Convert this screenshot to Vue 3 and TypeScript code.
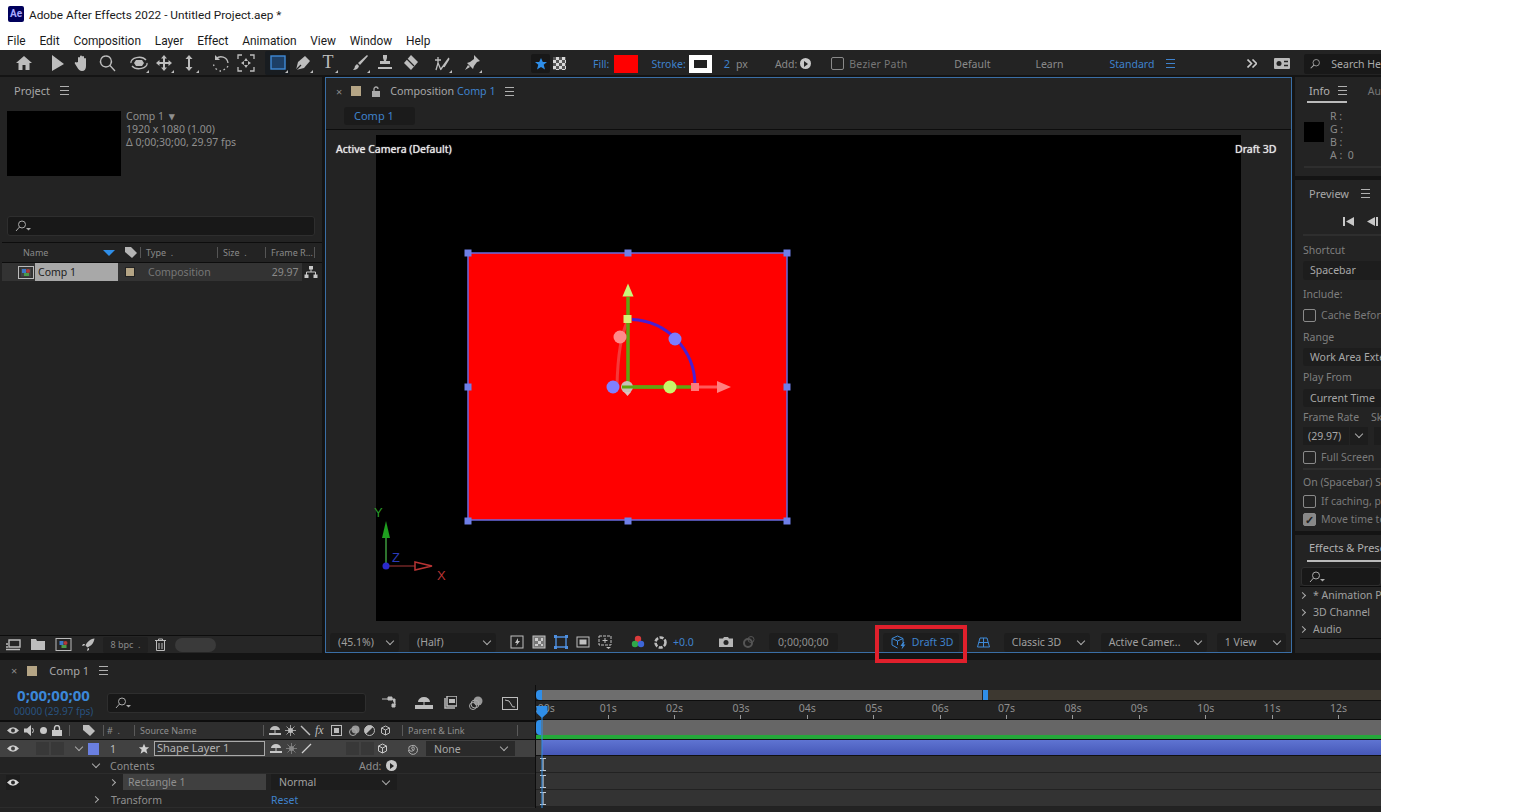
<template>
  <div class="window">
    <!-- title + menu -->
    <header class="titlebar">
      <span class="ae-logo">Ae</span>
      <span>Adobe After Effects 2022 - Untitled Project.aep *</span>
    </header>
    <nav class="menubar">
      <span v-for="m in menus" :key="m">{{ m }}</span>
    </nav>

    <!-- tools -->
    <div class="toolbar">
      <div v-for="(group, gi) in toolGroups" :key="gi" class="tool-group">
        <span v-for="t in group" :key="t.id" class="tool" :class="{ 'tool-on': t.id === 'rect' }">
          <svg width="20" height="20" viewBox="0 0 20 20">
            <text v-if="t.id === 'type'" x="10" y="15" text-anchor="middle" class="tool-t">T</text>
            <path v-if="t.fill" :d="t.fill" class="ico-fill" />
            <path v-if="t.line" :d="t.line" class="ico-line" />
            <path v-if="t.dark" :d="t.dark" class="ico-dark" />
            <rect v-if="t.id === 'rect'" x="3" y="3" width="14" height="13" class="rect-ico" />
            <path v-if="t.more" d="M20 20h-3l3-3z" class="ico-fill" />
          </svg>
        </span>
      </div>
      <div class="tool-opts">
        <span class="star-btn">
          <svg width="14" height="14" viewBox="0 0 14 14"><path d="M7 1l1.800 4H13l-3.300 2.800L11 12.500 7 10l-4 2.500 1.300-4.700L1 5h4.200z" fill="#2f8ee8" /></svg>
        </span>
        <span class="checker"></span>
        <span class="blue fill-lbl">Fill:</span>
        <span class="fill-swatch"></span>
        <span class="blue stroke-lbl">Stroke:</span>
        <span class="stroke-swatch"><i></i></span>
        <span class="blue two">2</span>
        <span class="px">px</span>
        <span class="add-lbl">Add:</span>
        <span class="add-dot"></span>
        <span class="box bez-box"></span>
        <span class="bez-lbl">Bezier Path</span>
        <span class="ws ws-default">Default</span>
        <span class="ws ws-learn">Learn</span>
        <span class="blue ws ws-std">Standard</span>
        <i class="burger burger-blue"></i>
        <svg class="chevrons" width="10" height="9" viewBox="0 0 10 9"><path d="M.5.5l4 4-4 4M5.500.5l4 4-4 4" fill="none" stroke="#c8c8c8" stroke-width="1.600" /></svg>
        <span class="gear-btn">
          <svg width="16" height="11" viewBox="0 0 16 11"><rect width="16" height="11" rx="1" fill="#b9b9b9" /><circle cx="5" cy="5.500" r="2.500" fill="#222" /><path d="M10 3.500h4M10 7.500h4" stroke="#222" stroke-width="1.400" /></svg>
        </span>
        <span class="help-search">
          <svg width="14" height="14" viewBox="0 0 14 14"><circle cx="8.500" cy="5.500" r="3.800" fill="none" stroke="#aaa" /><path d="M5.800 8.300L2 12" stroke="#aaa" stroke-width="1.200" /></svg>
          Search He
        </span>
      </div>
    </div>

    <main class="panels">
      <!-- project -->
      <section class="panel project">
        <div class="project-tab">
          <span class="tab-txt">Project</span>
          <i class="burger"></i>
        </div>
        <div class="project-info">
          <div class="thumb"></div>
          <div class="thumb-txt">
            <div>Comp 1 <b class="tri">▾</b></div>
            <div>1920 x 1080 (1.00)</div>
            <div>Δ 0;00;30;00, 29.97 fps</div>
          </div>
        </div>
        <div class="search project-search">
          <svg width="16" height="12" viewBox="0 0 16 12"><circle cx="7" cy="4.500" r="3.500" fill="none" stroke="#aaa" /><path d="M4.500 7L1 11" stroke="#aaa" /><path d="M11 8h5l-2.500 2.500z" fill="#aaa" /></svg>
        </div>
        <div class="proj-head">
          <span class="col-name">Name</span>
          <svg class="sort" width="12" height="6" viewBox="0 0 12 6"><path d="M0 0h12L6 6z" fill="#2f8ee8" /></svg>
          <svg class="tag" width="13" height="13" viewBox="0 0 13 13"><path d="M1 1h6l6 6-5 5-7-6z" fill="#b5b5b5" /></svg>
          <span class="col-type">Type&nbsp;&nbsp;.</span>
          <span class="col-size">Size&nbsp;&nbsp;.</span>
          <span class="col-rate">Frame R...</span>
        </div>
        <div class="proj-row">
          <svg class="comp-ico" width="16" height="13" viewBox="0 0 16 13">
            <rect x="0.500" y="0.500" width="15" height="12" fill="none" stroke="#bbb" />
            <rect x="3" y="2.500" width="10" height="8" fill="#444" />
            <rect x="4" y="3" width="4" height="4" fill="#3c78c8" />
            <circle cx="10" cy="5" r="2" fill="#b03a3a" />
            <rect x="6" y="7" width="5" height="3" fill="#4a9a4a" />
          </svg>
          <span class="proj-name">Comp 1</span>
          <span class="proj-color"></span>
          <span class="proj-type">Composition</span>
          <span class="proj-rate">29.97</span>
          <span class="flow-cell">
            <svg width="14" height="14" viewBox="0 0 14 14"><path d="M5 1h4v3.500H5zM0.500 9.500h4V13h-4zM9.500 9.500h4V13h-4z" fill="#c8c8c8" /><path d="M7 4v3M2.500 10V7h9v3" fill="none" stroke="#c8c8c8" /></svg>
          </span>
        </div>
        <div class="project-rest"></div>
        <div class="project-foot">
          <svg width="16" height="12" viewBox="0 0 16 12"><path d="M4 1h11v7H4zM1 5h2M1 8h2M1 10.500h14" fill="none" stroke="#bbb" stroke-width="1.400" /></svg>
          <svg width="14" height="11" viewBox="0 0 14 11"><path d="M0 0h5l1 2h8v9H0z" fill="#bdbdbd" /></svg>
          <svg width="17" height="13" viewBox="0 0 16 13"><rect x="0.500" y="0.500" width="15" height="12" fill="none" stroke="#bbb" /><rect x="4" y="3" width="4" height="4" fill="#3c78c8" /><circle cx="10" cy="5" r="2" fill="#b03a3a" /><rect x="6" y="7" width="5" height="3" fill="#4a9a4a" /></svg>
          <svg width="13" height="13" viewBox="0 0 13 13"><path d="M12.500 0.500C8 1 5 4 3.500 7.500l2 2C9 8 12 5 12.500 0.500zM3 6H1l-1 2 2.500-.5zM7 10v2l-2 1 .5-2.500z" fill="#bdbdbd" /></svg>
          <span class="bpc">8 bpc&nbsp;&nbsp;.</span>
          <svg width="11" height="13" viewBox="0 0 11 13"><path d="M0 2.500h11M3.500 2.500V1h4v1.500M1.500 3v9.500h8V3M4 5v6M7 5v6" fill="none" stroke="#bbb" /></svg>
          <span class="pill"></span>
        </div>
      </section>

      <!-- composition viewer -->
      <section class="panel comp">
        <div class="comp-tab">
          <span class="x">×</span>
          <span class="swatch-tan"></span>
          <svg class="lock" width="10" height="11" viewBox="0 0 10 11"><rect x="1" y="5" width="8" height="6" fill="#aaa" /><path d="M3 5V3a2 2 0 0 1 4 0" fill="none" stroke="#aaa" stroke-width="1.300" /></svg>
          <span class="comp-title">Composition <em class="blue">Comp 1</em></span>
          <i class="burger"></i>
        </div>
        <div class="comp-sub">
          <span class="comp-chip blue">Comp 1</span>
        </div>
        <div class="viewer">
          <span class="view-label view-left">Active Camera (Default)</span>
          <span class="view-label view-right">Draft 3D</span>
          <svg class="stage" width="865" height="486" viewBox="376 135 865 486">
            <rect x="468" y="253" width="319" height="267" fill="#ff0000" stroke="#6a6ae0" stroke-width="1.500" />
            <rect v-for="h in handles" :key="h[0] + '-' + h[1]" :x="h[0] - 3.5" :y="h[1] - 3.5" width="7" height="7" fill="#6e7fe8" />
            <!-- gizmo -->
            <path d="M695 387h24" stroke="#ff5a5a" stroke-width="3" />
            <path d="M717 381l14 6-14 6z" fill="#ff8080" />
            <path d="M617 386Q618 340 628 320" fill="none" stroke="#f53a3a" stroke-width="3" />
            <path d="M632 319.500A66 66 0 0 1 695 385" fill="none" stroke="#4b1fd0" stroke-width="3" />
            <path d="M628 297V387M628 387H695" stroke="#5fa510" stroke-width="3.500" />
            <path d="M628 283.500l5.500 13h-11z" fill="#c8f57a" />
            <circle cx="675" cy="339" r="6.500" fill="#7d7dff" />
            <circle cx="670" cy="387" r="6.500" fill="#c9f56a" />
            <circle cx="620" cy="337" r="6.500" fill="#ff8a8a" />
            <circle cx="613" cy="387" r="6.500" fill="#8080ff" />
            <circle cx="627" cy="387" r="6" fill="#c8c0b8" />
            <path d="M624 392l3.500 4 3.500-4z" fill="#e0c0c0" />
            <path d="M622 387h40" stroke="#5fa510" stroke-width="3" />
            <rect x="623.500" y="315" width="8" height="8" fill="#d8ee77" />
            <rect x="691" y="383" width="8" height="8" fill="#ff7a7a" />
            <!-- axis -->
            <path d="M386 566V538" stroke="#3c9a3c" stroke-width="1.500" />
            <path d="M386 521l4 17h-8z" fill="#1f9f1f" />
            <path d="M386 566H415" stroke="#a83838" />
            <path d="M415 562l17 4-17 4z" fill="none" stroke="#b83434" stroke-width="1.500" />
            <circle cx="386" cy="566" r="3.500" fill="#2a2acc" />
            <text x="374" y="517" class="axis" fill="#2a9a2a">Y</text>
            <text x="392" y="562" class="axis" fill="#2a3ab8">Z</text>
            <text x="437" y="580" class="axis" fill="#b83434">X</text>
          </svg>
        </div>
        <div class="comp-foot">
          <span class="dd dd-zoom">(45.1%) <i class="chev"></i></span>
          <span class="dd dd-half">(Half) <i class="chev"></i></span>
          <span class="foot-ico ico-a">
            <svg width="14" height="14" viewBox="0 0 14 14"><rect x="1" y="1" width="12" height="12" fill="none" stroke="#c0c0c0" /><path d="M8 3L5 8h2l-1 3 4-5H8z" fill="#c0c0c0" /></svg>
          </span>
          <span class="foot-ico">
            <svg width="14" height="14" viewBox="0 0 14 14"><rect x="1" y="1" width="12" height="12" fill="#777" stroke="#c0c0c0" /><path d="M3 3h3v3H3zM9 3h2v3H9zM6 6h3v3H6zM3 9h3v2H3zM9 9h2v2H9z" fill="#ccc" /></svg>
          </span>
          <span class="foot-ico">
            <svg width="14" height="14" viewBox="0 0 14 14"><path d="M2 2h10v10H2z" fill="none" stroke="#4e8fe0" stroke-width="1.400" /><path d="M0 0h3v3H0zM11 0h3v3h-3zM0 11h3v3H0zM11 11h3v3h-3z" fill="#4e8fe0" /></svg>
          </span>
          <span class="foot-ico">
            <svg width="14" height="14" viewBox="0 0 14 14"><rect x="1" y="2" width="12" height="10" fill="none" stroke="#c0c0c0" /><rect x="3.500" y="4.500" width="7" height="5" fill="#c0c0c0" /></svg>
          </span>
          <span class="foot-ico">
            <svg width="14" height="14" viewBox="0 0 14 14"><rect x="1" y="1" width="12" height="9" fill="none" stroke="#c0c0c0" stroke-dasharray="3 1" /><path d="M7 3v5M4.500 5.500h5" stroke="#c0c0c0" /><path d="M8 12h5l-2.500 2z" fill="#c0c0c0" /></svg>
          </span>
          <svg class="rgb" width="14" height="14" viewBox="0 0 14 14"><circle cx="7" cy="4" r="3.200" fill="#d93b3b" /><circle cx="4" cy="9" r="3.200" fill="#2fa84a" /><circle cx="10" cy="9" r="3.200" fill="#3d66d8" /></svg>
          <svg class="shutter" width="13" height="13" viewBox="0 0 13 13"><circle cx="6.500" cy="6.500" r="5" fill="none" stroke="#bdbdbd" stroke-width="2.600" stroke-dasharray="4 1.500" /></svg>
          <span class="blue exposure">+0.0</span>
          <svg class="cam" width="14" height="12" viewBox="0 0 14 12"><path d="M0 2.500h4L5 1h4l1 1.500h4V11H0z" fill="#b5b5b5" /><circle cx="7" cy="6.500" r="2.500" fill="#232323" /></svg>
          <svg class="cam-off" width="14" height="12" viewBox="0 0 14 12"><circle cx="7" cy="7" r="4" fill="none" stroke="#555" stroke-width="2" /><circle cx="10" cy="3.500" r="3" fill="none" stroke="#555" /></svg>
          <span class="time-box">0;00;00;00</span>
          <span class="draft-btn blue">
            <svg width="16" height="15" viewBox="0 0 16 15"><path d="M6.500 1L12 3.500V7M6.500 1L1 3.500v6.500l5.500 3M1 3.500l5.500 2.500L12 3.500M6.500 6v4" fill="none" stroke="#3f8ad8" /><path d="M12 7l-2.500 4h2l-1 3.500 4-5h-2l1-2.500z" fill="#3f8ad8" /></svg>
            Draft 3D
          </span>
          <svg class="grid-ico" width="13" height="11" viewBox="0 0 13 11"><path d="M3 1h7l2.500 9H.5zM6.500 1v9M1.800 5.500h9.400" fill="none" stroke="#3f8ad8" /></svg>
          <span class="dd dd-classic">Classic 3D <i class="chev"></i></span>
          <span class="dd dd-cam">Active Camer... <i class="chev"></i></span>
          <span class="dd dd-view">1 View <i class="chev"></i></span>
        </div>
      </section>

      <!-- right stack -->
      <aside class="right">
        <section class="panel info">
          <div class="info-tabs">
            <span class="info-tab">Info <i class="burger"></i></span>
            <span class="dim-tab">Au</span>
          </div>
          <div class="info-body">
            <span class="info-swatch"></span>
            <div class="rgba">
              <div>R :</div>
              <div>G :</div>
              <div>B :</div>
              <div>A :&nbsp; 0</div>
            </div>
          </div>
        </section>
        <section class="panel preview">
          <div class="prev-title">Preview <i class="burger"></i></div>
          <div class="prev-btns">
            <svg width="11" height="9" viewBox="0 0 11 9"><path d="M0 0h2v9H0zM11 0v9L3 4.500z" fill="#c8c8c8" /></svg>
            <svg width="11" height="9" viewBox="0 0 11 9"><path d="M9 0h2v9H9zM8 0v9L0 4.500z" fill="#c8c8c8" /></svg>
          </div>
          <div class="lbl m5">Shortcut</div>
          <div class="drop m2 tall">Spacebar</div>
          <div class="lbl m5">Include:</div>
          <div class="check-row m3"><span class="box"></span>Cache Before</div>
          <div class="lbl m4">Range</div>
          <div class="drop m2">Work Area Extents</div>
          <div class="lbl m2">Play From</div>
          <div class="drop m3">Current Time</div>
          <div class="lbl m1 rate-lbl"><span>Frame Rate</span><span>Sk</span></div>
          <div class="rate-row m1">
            <span class="rate-val">(29.97)</span>
            <span class="rate-chev"><i class="chev"></i></span>
            <span class="rate-next"></span>
          </div>
          <div class="check-row m3 rule"><span class="box"></span>Full Screen</div>
          <div class="lbl m3">On (Spacebar) Stop</div>
          <div class="check-row m1"><span class="box"></span>If caching, play</div>
          <div class="check-row"><span class="box box-on">✓</span>Move time to</div>
        </section>
        <section class="panel effects">
          <div class="eff-tab">Effects &amp; Presets</div>
          <div class="search eff-search">
            <svg width="16" height="12" viewBox="0 0 16 12"><circle cx="7" cy="4.500" r="3.500" fill="none" stroke="#aaa" /><path d="M4.500 7L1 11" stroke="#aaa" /><path d="M11 8h5l-2.500 2.500z" fill="#aaa" /></svg>
          </div>
          <div class="eff-list">
            <div v-for="e in effects" :key="e"><i class="chev-r"></i>{{ e }}</div>
          </div>
        </section>
      </aside>
    </main>

    <!-- timeline -->
    <section class="timeline">
      <div class="tl-tab">
        <span class="x">×</span>
        <span class="swatch-tan"></span>
        <span class="tl-name">Comp 1</span>
        <i class="burger"></i>
      </div>
      <div class="tl-body">
        <div class="tl-left">
          <div class="tl-time">
            <div class="timecode">
              <div class="tc-main">0;00;00;00</div>
              <div class="tc-sub">00000 (29.97 fps)</div>
            </div>
            <div class="search tl-search">
              <svg width="16" height="12" viewBox="0 0 16 12"><circle cx="7" cy="4.500" r="3.500" fill="none" stroke="#aaa" /><path d="M4.500 7L1 11" stroke="#aaa" /><path d="M11 8h5l-2.500 2.500z" fill="#aaa" /></svg>
            </div>
            <div class="tl-tools">
              <svg width="16" height="14" viewBox="0 0 16 14"><path d="M0 3h6M6 1h4v3H6zM10 3h3v6M10 8h3v3h-3z" fill="#bdbdbd" stroke="#bdbdbd" /></svg>
              <svg width="18" height="13" viewBox="0 0 18 13"><path d="M3 6a6 5 0 0 1 12 0zM8.500 6h1v3h-1zM0 9h18v4H0z" fill="#bdbdbd" /></svg>
              <svg width="14" height="14" viewBox="0 0 14 14"><path d="M4 0h10v10H4zM2 2v10h10" fill="none" stroke="#bdbdbd" stroke-width="1.500" /><rect x="6" y="3" width="6" height="4" fill="#bdbdbd" /></svg>
              <svg width="14" height="14" viewBox="0 0 14 14"><circle cx="9" cy="5" r="4.500" fill="#999" /><circle cx="6" cy="8" r="4" fill="none" stroke="#aaa" /><circle cx="4" cy="10" r="3.500" fill="none" stroke="#aaa" /></svg>
              <svg width="16" height="14" viewBox="0 0 16 14"><rect x="0.500" y="1.500" width="15" height="12" fill="none" stroke="#bdbdbd" /><path d="M3 4q5 0 6 4t4 3" fill="none" stroke="#bdbdbd" /></svg>
            </div>
          </div>
          <div class="tl-head">
            <div class="head-av">
              <svg width="12" height="9" viewBox="0 0 12 9"><path d="M0 4.500Q6-2 12 4.500 6 11 0 4.500z" fill="#c8c8c8" /><circle cx="6" cy="4.500" r="2" fill="#333" /></svg>
              <svg width="11" height="11" viewBox="0 0 11 11"><path d="M0 3.500h3L7 0v11L3 7.500H0z" fill="#c8c8c8" /><path d="M8.500 3q2 2.500 0 5" fill="none" stroke="#c8c8c8" /></svg>
              <span class="solo-dot"></span>
              <svg width="10" height="11" viewBox="0 0 10 11"><rect y="5" width="10" height="6" fill="#c8c8c8" /><path d="M2.500 5V3a2.500 2.500 0 0 1 5 0v2" fill="none" stroke="#c8c8c8" stroke-width="1.400" /></svg>
            </div>
            <svg class="tl-tag" width="13" height="13" viewBox="0 0 13 13"><path d="M1 1h6l6 6-5 5-7-6z" fill="#bdbdbd" /></svg>
            <span class="hash">#&nbsp;&nbsp;.</span>
            <span class="src">Source Name</span>
            <div class="head-sw">
              <svg width="12" height="11" viewBox="0 0 12 11"><path d="M1 5a5 4 0 0 1 10 0zM5.500 5h1v3h-1zM0 8h12v2H0z" fill="#bdbdbd" /></svg>
              <svg width="11" height="11" viewBox="0 0 11 11"><circle cx="5.500" cy="5.500" r="2.500" fill="#bdbdbd" /><path d="M5.500 0v11M0 5.500h11M1.500 1.500l8 8M9.500 1.500l-8 8" stroke="#bdbdbd" stroke-width=".8" /></svg>
              <svg width="11" height="11" viewBox="0 0 11 11"><path d="M1 1l9 9" stroke="#bdbdbd" stroke-width="1.400" /></svg>
              <em class="fx">fx</em>
              <svg class="sw-film" width="11" height="11" viewBox="0 0 11 11"><rect x=".5" y=".5" width="10" height="10" fill="none" stroke="#bdbdbd" /><path d="M3 3h5v5H3z" fill="#bdbdbd" /></svg>
              <svg class="sw-blur" width="12" height="12" viewBox="0 0 12 12"><circle cx="7.500" cy="4.500" r="4" fill="#999" /><circle cx="5" cy="7" r="3.500" fill="none" stroke="#aaa" /></svg>
              <svg width="11" height="11" viewBox="0 0 11 11"><circle cx="5.500" cy="5.500" r="5" fill="none" stroke="#bdbdbd" /><path d="M5.500.5a5 5 0 0 0 0 10z" transform="rotate(45 5.500 5.500)" fill="#bdbdbd" /></svg>
              <svg class="sw-cube" width="11" height="11" viewBox="0 0 11 11"><path d="M5.500 1l4 2v5l-4 2-4-2V3zM1.500 3l4 2 4-2M5.500 5v5" fill="none" stroke="#bdbdbd" /></svg>
            </div>
            <span class="parent">Parent &amp; Link</span>
          </div>
          <div class="layer-row">
            <svg class="eye" width="12" height="9" viewBox="0 0 12 9"><path d="M0 4.500Q6-2 12 4.500 6 11 0 4.500z" fill="#d0d0d0" /><circle cx="6" cy="4.500" r="2" fill="#414141" /></svg>
            <span class="cell-dark c1"></span>
            <span class="cell-dark"></span>
            <i class="chev lay-chev"></i>
            <span class="lay-color"></span>
            <span class="lay-num">1</span>
            <svg class="lay-star" width="12" height="12" viewBox="0 0 14 14"><path d="M7 1l1.800 4H13l-3.300 2.800L11 12.500 7 10l-4 2.500 1.300-4.700L1 5h4.200z" fill="#d0d0d0" /></svg>
            <span class="lay-name">Shape Layer 1</span>
            <svg class="sw1" width="12" height="11" viewBox="0 0 12 11"><path d="M1 5a5 4 0 0 1 10 0zM5.500 5h1v3h-1zM0 8h12v2H0z" fill="#c8c8c8" /></svg>
            <svg class="sw2" width="11" height="11" viewBox="0 0 11 11"><circle cx="5.500" cy="5.500" r="2.500" fill="#888" /><path d="M5.500 0v11M0 5.500h11M1.500 1.500l8 8M9.500 1.500l-8 8" stroke="#888" stroke-width=".8" /></svg>
            <svg class="sw3" width="11" height="11" viewBox="0 0 11 11"><path d="M1 10L10 1" stroke="#d0d0d0" stroke-width="1.300" /></svg>
            <span class="cell-dark c2"></span>
            <span class="cell-dark"></span>
            <svg class="sw4" width="11" height="11" viewBox="0 0 11 11"><path d="M5.500 1l4 2v5l-4 2-4-2V3zM1.500 3l4 2 4-2M5.500 5v5" fill="none" stroke="#c8c8c8" /></svg>
            <svg class="spiral" width="12" height="12" viewBox="0 0 12 12"><path d="M6 6.500a1.300 1.300 0 1 1 1.300-1.300 2.800 2.800 0 1 1-3-2.500A4.500 4.500 0 1 1 1.500 7" fill="none" stroke="#b0b0b0" /></svg>
            <span class="parent-dd">None <i class="chev"></i></span>
          </div>
          <div class="prop-row">
            <i class="chev prop-chev"></i><span class="prop-lbl">Contents</span>
            <span class="add2">Add:</span><span class="add-dot"></span>
          </div>
          <div class="rect-row">
            <span class="eye-cell">
              <svg width="12" height="9" viewBox="0 0 12 9"><path d="M0 4.500Q6-2 12 4.500 6 11 0 4.500z" fill="#d8d8d8" /><circle cx="6" cy="4.500" r="2" fill="#282828" /></svg>
            </span>
            <i class="chev-r rect-chev"></i>
            <span class="rect-name">Rectangle 1</span>
            <span class="blend-dd">Normal <i class="chev"></i></span>
          </div>
          <div class="prop-row">
            <i class="chev-r trans-chev"></i><span class="prop-lbl">Transform</span>
            <span class="reset blue">Reset</span>
          </div>
        </div>
        <div class="tl-right">
          <div class="nav-bar">
            <span class="nav-range"></span>
            <span class="nav-end"></span>
          </div>
          <div class="ruler">
            <span v-for="s in ticks" :key="s" class="tick">{{ s }}</span>
          </div>
          <div class="work-area"></div>
          <div class="green-line"></div>
          <div class="layer-bar"></div>
          <div v-for="n in 3" :key="n" class="track">
            <svg width="8" height="13" viewBox="0 0 8 13"><path d="M1 .5h6M4 .5v12M1 12.500h6" fill="none" stroke="#c4ccd6" stroke-width="1.200" /></svg>
          </div>
          <svg class="cti" width="14" height="130" viewBox="0 0 14 130"><path d="M1.500 5h11v7L7 17l-5.500-5z" fill="#2f8ee8" /><path d="M7 14v116" stroke="#2f8ee8" /></svg>
        </div>
      </div>
    </section>

    <!-- annotation on the screenshot -->
    <div class="callout"></div>
  </div>
</template>

<script setup lang="ts">
interface Tool {
  id: string
  fill?: string
  line?: string
  dark?: string
  more?: boolean
}

const menus = ['File', 'Edit', 'Composition', 'Layer', 'Effect', 'Animation', 'View', 'Window', 'Help']

const toolGroups: Tool[][] = [
  [{ id: 'home', fill: 'M10 3l8 7h-2.500v7h-4v-5h-3v5h-4v-7H2z' }],
  [
    { id: 'select', fill: 'M5 2l12 9-12 7z' },
    { id: 'hand', fill: 'M6 9V5a1 1 0 0 1 2 0v3-4.500a1 1 0 0 1 2 0V8 4a1 1 0 0 1 2 0v5-3a1 1 0 0 1 2 0v7q0 5-4 5-3 0-5-4l-2.200-3.500a1 1 0 0 1 1.700-1z' },
    { id: 'zoom', line: 'M9 3a5.500 5.500 0 1 1-.1 0M13 12.500l5 5.500' },
  ],
  [
    { id: 'orbit', line: 'M2 10a8 5 0 0 1 15-3M18 10a8 5 0 0 1-15 3', fill: 'M7 7h6l2 3-2 3H7l-2-3z', more: true },
    { id: 'move', fill: 'M10 2l3 3.500h-2V9h3.500V7l3.500 3-3.500 3v-2H11v3.500h2L10 18l-3-3.500h2V11H5.500v2L2 10l3.500-3v2H9V5.500H7z', more: true },
    { id: 'dolly', fill: 'M10 2l3.500 4H11v8h2.500L10 18l-3.500-4H9V6H6.500z', more: true },
  ],
  [
    { id: 'rotate', fill: 'M4 2v5h5z', line: 'M5 6a7 7 0 0 1 12 4M17 13l-1 1.500M14 16l-1.500 1M10 18H8.500M6 16.500l-1.500-1M3 13l-.5-1.500' },
    { id: 'anchor', line: 'M2 6V2h4M14 2h4v4M18 14v4h-4M6 18H2v-4', fill: 'M10 5l2 3H8zM10 15l2-3H8zM5 10l3-2v4zM15 10l-3-2v4z' },
  ],
  [
    { id: 'rect', more: true },
    { id: 'pen', fill: 'M3 17l2-8 7-6 5 5-6 7z', dark: 'M3 17l5-5', more: true },
    { id: 'type', more: true },
  ],
  [
    { id: 'brush', fill: 'M17 2l1 1-8 9-2-2zM7 11l2 2q-1 4-6 4 2-2 2-4z', more: true },
    { id: 'stamp', fill: 'M8 2h4v3l-1 3h4v3H5V8h4L8 5zM3 14h14v2H3z' },
    { id: 'eraser', fill: 'M11 2l7 7-7 8-7-7z', dark: 'M7 6l7 7' },
  ],
  [{ id: 'roto', line: 'M6 4v6M3 7h6M6 10l-2 7M6 10l3 7M9 16L17 5M12 14l5-8', more: true }],
  [{ id: 'pin', fill: 'M12 2l6 6-3 1-3 4-1 3-6-6 3-1 4-3zM6 12l-3 5 5-3z', more: true }],
]

const handles: [number, number][] = [
  [468, 253], [628, 253], [787, 253],
  [468, 387], [787, 387],
  [468, 521], [628, 521], [787, 521],
]

const effects = ['* Animation Presets', '3D Channel', 'Audio']

const ticks = [':00s', '01s', '02s', '03s', '04s', '05s', '06s', '07s', '08s', '09s', '10s', '11s', '12s']
</script>

<style>
html,
body {
  margin: 0;
  background: #fff;
}
</style>

<style scoped>
.window {
  position: relative;
  width: 1381px;
  height: 812px;
  overflow: hidden;
  background: #141414;
  font-family: "Noto Sans", "Open Sans", sans-serif;
  font-size: 10.500px;
  color: #9a9a9a;
  display: flex;
  flex-direction: column;
}
.blue {
  color: #3f82cc;
}
em {
  font-style: normal;
}

/* shared bits */
.burger {
  display: inline-block;
  width: 9px;
  height: 7px;
  border-top: 1px solid #b0b0b0;
  border-bottom: 1px solid #b0b0b0;
  background: linear-gradient(#b0b0b0, #b0b0b0) center / 100% 1px no-repeat;
}
.burger.burger-blue {
  border-color: #3f82cc;
  background-image: linear-gradient(#3f82cc, #3f82cc);
  margin-left: 12px;
}
.chev {
  display: inline-block;
  width: 5px;
  height: 5px;
  border-right: 1px solid #aaa;
  border-bottom: 1px solid #aaa;
  transform: rotate(45deg);
}
.chev-r {
  display: inline-block;
  width: 4px;
  height: 4px;
  border-right: 1px solid #aaa;
  border-top: 1px solid #aaa;
  transform: rotate(45deg);
}
.box {
  display: inline-block;
  box-sizing: border-box;
  width: 13px;
  height: 13px;
  border: 1.500px solid #8a8a8a;
  border-radius: 2px;
  flex: none;
}
.search {
  box-sizing: border-box;
  background: #181818;
  border: 1px solid #2e2e2e;
  border-radius: 3px;
  display: flex;
  align-items: center;
  padding-left: 7px;
}
.swatch-tan {
  width: 10px;
  height: 10px;
  background: #b5a585;
  flex: none;
}
.x {
  color: #8a8a8a;
  font-size: 11px;
}
.add-dot {
  width: 11px;
  height: 11px;
  border-radius: 50%;
  background: #c8c8c8;
  position: relative;
  flex: none;
}
.add-dot::after {
  content: "";
  position: absolute;
  left: 4px;
  top: 2.500px;
  border-left: 4px solid #232323;
  border-top: 3px solid transparent;
  border-bottom: 3px solid transparent;
}

/* title + menu */
.titlebar {
  height: 28px;
  box-sizing: border-box;
  padding: 2px 0 0 8px;
  background: #fff;
  color: #1a1a1a;
  font-family: Roboto, sans-serif;
  font-size: 11.800px;
  display: flex;
  align-items: center;
  gap: 5px;
}
.ae-logo {
  width: 16px;
  height: 16px;
  margin-top: -2px;
  background: #00005b;
  border-radius: 2px;
  color: #a7a8ff;
  font-size: 10px;
  font-weight: 700;
  text-align: center;
  line-height: 16px;
}
.menubar {
  height: 22px;
  box-sizing: border-box;
  padding: 3px 0 0 7px;
  background: #fff;
  color: #1a1a1a;
  font-family: Roboto, sans-serif;
  font-size: 11.900px;
  display: flex;
  align-items: center;
  gap: 13.800px;
}

/* toolbar */
.toolbar {
  height: 25px;
  margin-bottom: 2px;
  background: #232323;
  display: flex;
  align-items: center;
  padding-left: 11px;
}
.tool-group {
  display: flex;
  margin-right: 7px;
}
.tool-group:first-child {
  margin-right: 8px;
}
.tool-group:nth-child(7) {
  margin-right: 5px;
}
.tool {
  width: 25px;
  height: 24px;
  display: flex;
  align-items: center;
  justify-content: center;
  box-sizing: border-box;
}
.tool-on {
  background: #181c20;
  border-radius: 2px;
}
.ico-fill {
  fill: #bdbdbd;
}
.ico-line {
  fill: none;
  stroke: #bdbdbd;
  stroke-width: 1.300;
}
.ico-dark {
  fill: none;
  stroke: #232323;
  stroke-width: 1.200;
}
.rect-ico {
  fill: #1d3f66;
  stroke: #3f8ad8;
  stroke-width: 1.400;
}
.tool-t {
  font-family: "Liberation Serif", serif;
  font-size: 18px;
  fill: #bdbdbd;
}
.tool-opts {
  display: flex;
  align-items: center;
  flex: 1;
  margin-left: 40px;
  height: 25px;
  padding-top: 2px;
  box-sizing: border-box;
  font-size: 10.500px;
}
.star-btn {
  width: 19px;
  height: 19px;
  background: #181818;
  border-radius: 2px;
  display: flex;
  align-items: center;
  justify-content: center;
}
.checker {
  width: 13px;
  height: 13px;
  margin-left: 3px;
  background: repeating-conic-gradient(#d8d8d8 0 25%, #555 0 50%) 0 0 / 6px 6px;
}
.fill-lbl {
  margin-left: 27px;
}
.fill-swatch {
  width: 24px;
  height: 18px;
  margin-left: 5px;
  background: #ff0000;
}
.stroke-lbl {
  margin-left: 13px;
}
.stroke-swatch {
  box-sizing: border-box;
  width: 23px;
  height: 18px;
  margin-left: 3px;
  border: 5px solid #fff;
  background: #222;
}
.two {
  margin-left: 12px;
  font-size: 11px;
}
.px {
  margin-left: 6px;
  color: #8a8a8a;
}
.add-lbl {
  margin-left: 27px;
  margin-right: 3px;
  color: #8a8a8a;
}
.bez-box {
  margin-left: 20px;
}
.bez-lbl {
  margin-left: 5px;
  color: #777;
  letter-spacing: 0.200px;
}
.ws {
  color: #8a8a8a;
}
.ws-default {
  margin-left: 47px;
}
.ws-learn {
  margin-left: 45px;
}
.ws.ws-std {
  margin-left: 46px;
  color: #3f82cc;
}
.chevrons {
  margin-left: 72px;
  flex: none;
}
.gear-btn {
  margin-left: 17px;
  display: flex;
}
.help-search {
  box-sizing: border-box;
  margin-left: 14px;
  flex: 1;
  height: 20px;
  background: #181818;
  border-radius: 2px 0 0 2px;
  display: flex;
  align-items: center;
  gap: 10px;
  padding-left: 5px;
  color: #aaa;
  white-space: nowrap;
  overflow: hidden;
}

/* panels row */
.panels {
  height: 576px;
  display: grid;
  grid-template-columns: 322px 967px 1fr;
  column-gap: 3px;
}
.panel {
  background: #232323;
  min-width: 0;
}

/* project */
.project {
  display: flex;
  flex-direction: column;
}
.project-tab {
  height: 28px;
  box-sizing: border-box;
  padding: 0 0 2px 14px;
  display: flex;
  align-items: center;
  gap: 10px;
  flex: none;
}
.tab-txt {
  color: #a8a8a8;
  font-size: 11px;
}
.project-info {
  display: flex;
  margin-left: 7px;
  margin-top: 6px;
  gap: 5px;
  flex: none;
}
.thumb {
  width: 114px;
  height: 65px;
  background: #000;
}
.thumb-txt {
  line-height: 13px;
  color: #8f8f8f;
  margin-top: -2px;
}
.tri {
  font-size: 11px;
  margin-left: 2px;
}
.project-search {
  width: 308px;
  height: 20px;
  margin: 40px 0 6px 7px;
  flex: none;
}
.proj-head {
  height: 19px;
  border-top: 1px solid #0d0d0d;
  border-bottom: 1px solid #0d0d0d;
  margin-left: 2px;
  display: flex;
  align-items: center;
  font-size: 9px;
  color: #8a8a8a;
  flex: none;
}
.col-name {
  margin-left: 21px;
  width: 22px;
}
.sort {
  margin-left: 58px;
}
.tag {
  margin-left: 9px;
}
.col-type {
  box-sizing: border-box;
  width: 77px;
  margin-left: 3px;
  padding-left: 5px;
  line-height: 11px;
  border-left: 1px solid #555;
}
.col-size {
  box-sizing: border-box;
  width: 48px;
  padding-left: 5px;
  line-height: 11px;
  border-left: 1px solid #555;
}
.col-rate {
  box-sizing: border-box;
  width: 50px;
  padding-left: 5px;
  line-height: 11px;
  border-left: 1px solid #555;
  border-right: 1px solid #555;
  white-space: nowrap;
}
.proj-row {
  height: 18px;
  margin-left: 2px;
  margin-right: 2px;
  background: #333;
  display: flex;
  align-items: center;
  flex: none;
}
.comp-ico {
  margin-left: 16px;
}
.proj-name {
  box-sizing: border-box;
  width: 83px;
  height: 18px;
  margin-left: 1px;
  padding-left: 3px;
  background: #a8a8a8;
  color: #1d1d1d;
  line-height: 18px;
}
.proj-color {
  width: 10px;
  height: 10px;
  margin-left: 7px;
  background: #b5a585;
  border: 1px solid #222;
  box-sizing: border-box;
}
.proj-type {
  margin-left: 13px;
  color: #777;
}
.proj-rate {
  margin-left: 61px;
  color: #8a8a8a;
}
.flow-cell {
  flex: 1;
  height: 18px;
  margin-left: 3px;
  background: #232323;
  display: flex;
  align-items: center;
  justify-content: center;
}
.project-rest {
  flex: 1;
}
.project-foot {
  height: 17px;
  border-top: 1px solid #0d0d0d;
  display: flex;
  align-items: center;
  gap: 10px;
  padding-left: 5px;
  background: #262626;
  flex: none;
}
.bpc {
  width: 45px;
  height: 16px;
  line-height: 16px;
  text-align: center;
  background: #202020;
  color: #888;
  font-size: 9px;
  border-radius: 2px;
  margin-left: -2px;
  margin-right: -3px;
}
.pill {
  width: 41px;
  height: 14px;
  border-radius: 7px;
  background: #3a3a3a;
  margin-left: -1px;
}

/* comp viewer */
.comp {
  display: flex;
  flex-direction: column;
  box-sizing: border-box;
  border: 1px solid #3a6ea5;
}
.comp-tab {
  height: 26px;
  display: flex;
  align-items: center;
  padding-left: 10px;
  flex: none;
}
.comp-tab .swatch-tan {
  margin-left: 9px;
}
.lock {
  margin-left: 10px;
}
.comp-title {
  margin-left: 9px;
  margin-right: 9px;
  color: #a8a8a8;
  font-size: 10.700px;
}
.comp-sub {
  height: 26px;
  box-sizing: border-box;
  padding: 3px 0 0 18px;
  border-bottom: 1px solid #0d0d0d;
  flex: none;
}
.comp-chip {
  display: block;
  width: 71px;
  height: 18px;
  line-height: 18px;
  background: #1b1b1b;
  border-radius: 3px;
  padding-left: 10px;
  box-sizing: border-box;
  font-size: 11px;
}
.viewer {
  position: relative;
  height: 486px;
  margin-top: 5px;
  background: #232323;
  flex: none;
}
.stage {
  display: block;
  margin-left: 50px;
  background: #000;
  overflow: visible;
}
.axis {
  font-family: "Liberation Sans", sans-serif;
  font-size: 13px;
}
.view-label {
  position: absolute;
  top: 7px;
  color: #e8e8e8;
  font-size: 10.500px;
  text-shadow: 0 0 1px #e8e8e8;
  z-index: 1;
}
.view-left {
  left: 10px;
}
.view-right {
  left: 909px;
}
.comp-foot {
  display: flex;
  align-items: center;
  height: 30px;
  padding-top: 12px;
  box-sizing: border-box;
  font-size: 10.500px;
  color: #a0a0a0;
}
.dd {
  display: flex;
  align-items: center;
  justify-content: space-between;
  box-sizing: border-box;
  height: 19px;
  padding: 0 6px 0 8px;
  background: #1d1d1d;
  border-radius: 3px;
  white-space: nowrap;
}
.dd .chev {
  margin-top: -3px;
}
.dd-zoom {
  width: 69px;
  margin-left: 4px;
}
.dd-half {
  width: 87px;
  margin-left: 10px;
}
.foot-ico {
  width: 22px;
  display: flex;
  justify-content: center;
}
.ico-a {
  margin-left: 10px;
}
.rgb {
  margin-left: 15px;
}
.shutter {
  margin-left: 9px;
}
.exposure {
  margin-left: 6px;
}
.cam {
  margin-left: 25px;
}
.cam-off {
  margin-left: 8px;
}
.time-box {
  box-sizing: border-box;
  width: 69px;
  height: 18px;
  line-height: 18px;
  margin-left: 14px;
  text-align: center;
  background: #1d1d1d;
  border-radius: 3px;
  color: #8f8f8f;
}
.draft-btn {
  display: flex;
  align-items: center;
  gap: 5px;
  box-sizing: border-box;
  width: 76px;
  height: 19px;
  padding-left: 8px;
  margin-left: 45px;
  background: #1d1d1d;
  border-radius: 3px;
}
.grid-ico {
  margin-left: 18px;
}
.dd-classic {
  width: 86px;
  margin-left: 14px;
}
.dd-cam {
  width: 106px;
  margin-left: 11px;
}
.dd-view {
  width: 69px;
  margin-left: 10px;
}

/* right stack */
.right {
  display: flex;
  flex-direction: column;
  gap: 4px;
  min-width: 0;
  overflow: hidden;
  white-space: nowrap;
}
.info {
  height: 99px;
  flex: none;
}
.info-tabs {
  height: 26px;
  display: flex;
  align-items: center;
  padding-left: 12px;
}
.info-tab {
  box-sizing: border-box;
  height: 25px;
  width: 42px;
  padding: 2px 0 0 2px;
  border-bottom: 2px solid #bbb;
  color: #b0b0b0;
  font-size: 11px;
  line-height: 21px;
  display: flex;
  align-items: center;
  justify-content: space-between;
}
.dim-tab {
  margin-left: 21px;
  margin-top: 2px;
  color: #777;
}
.info-body {
  display: flex;
  margin: 0 0 0 9px;
  gap: 6px;
  height: 65px;
  box-sizing: border-box;
  border-bottom: 2px solid #2e2e2e;
}
.info-swatch {
  width: 20px;
  height: 20px;
  margin-top: 19px;
  background: #000;
}
.rgba {
  line-height: 13px;
  padding-top: 7px;
  color: #8a8a8a;
}
.preview {
  height: 351px;
  flex: none;
  padding-left: 8px;
}
.prev-title {
  height: 28px;
  box-sizing: border-box;
  padding: 0 0 2px 6px;
  display: flex;
  align-items: center;
  gap: 12px;
  color: #a8a8a8;
  font-size: 11px;
}
.prev-btns {
  height: 28px;
  box-sizing: border-box;
  display: flex;
  align-items: center;
  gap: 13px;
  padding: 1px 0 0 40px;
  border-bottom: 2px solid #2e2e2e;
}
.lbl {
  height: 18px;
  line-height: 18px;
  color: #7f7f7f;
}
.drop {
  box-sizing: border-box;
  height: 18px;
  line-height: 18px;
  padding-left: 7px;
  background: #1d1d1d;
  color: #a8a8a8;
  border-radius: 3px 0 0 3px;
}
.tall {
  height: 19px;
}
.check-row {
  height: 18px;
  display: flex;
  align-items: center;
  gap: 5px;
  color: #7a7a7a;
}
.rule {
  height: 22px;
  padding-bottom: 2px;
  border-bottom: 2px solid #2e2e2e;
  box-sizing: border-box;
}
.box-on {
  background: #888;
  color: #222;
  font-size: 11px;
  line-height: 11px;
  text-align: center;
  font-weight: 700;
}
.rate-lbl {
  display: flex;
  gap: 12px;
}
.rate-row {
  display: flex;
  height: 18px;
  line-height: 18px;
}
.rate-val {
  flex: none;
  width: 46px;
  padding-left: 5px;
  box-sizing: border-box;
  background: #1d1d1d;
  color: #a8a8a8;
}
.rate-chev {
  flex: none;
  width: 18px;
  margin-left: 1px;
  background: #1d1d1d;
  text-align: center;
}
.rate-chev .chev {
  margin-bottom: 3px;
}
.rate-next {
  flex: none;
  width: 30px;
  margin-left: 6px;
  background: #1d1d1d;
}
.m1 {
  margin-top: 1px;
}
.m2 {
  margin-top: 2px;
}
.m3 {
  margin-top: 3px;
}
.m4 {
  margin-top: 4px;
}
.m5 {
  margin-top: 5px;
}
.effects {
  flex: 1;
  padding-left: 5px;
}
.eff-tab {
  margin: 1px 0 0 7px;
  height: 24px;
  padding-left: 2px;
  line-height: 24px;
  border-bottom: 2px solid #bbb;
  color: #b0b0b0;
  font-size: 11px;
}
.eff-search {
  height: 19px;
  margin: 5px 0 0 1px;
}
.eff-list {
  border-top: 1px solid #0d0d0d;
  border-bottom: 1px solid #0d0d0d;
  line-height: 17px;
  color: #a0a0a0;
}
.eff-list .chev-r {
  margin: 0 8px 1px 0;
}

/* timeline */
.timeline {
  margin-top: 7px;
  height: 152px;
  background: #232323;
  flex: none;
}
.tl-tab {
  height: 25px;
  box-sizing: border-box;
  padding: 0 0 4px 11px;
  display: flex;
  align-items: center;
}
.tl-tab .swatch-tan {
  margin-left: 10px;
}
.tl-name {
  margin-left: 12px;
  margin-right: 10px;
  color: #a8a8a8;
  font-size: 11px;
}
.tl-body {
  display: grid;
  grid-template-columns: 535px 1fr;
}
.tl-time {
  height: 35px;
  display: flex;
  align-items: center;
  border-bottom: 2px solid #0d0d0d;
}
.timecode {
  width: 107px;
  padding-bottom: 2px;
  text-align: center;
  box-sizing: border-box;
}
.tc-main {
  color: #3b87d8;
  font-size: 15px;
  font-weight: 700;
  line-height: 17px;
}
.tc-sub {
  margin-top: 1px;
  color: #28527f;
  font-size: 10px;
  line-height: 12px;
}
.tl-search {
  width: 259px;
  height: 20px;
}
.tl-tools {
  display: flex;
  align-items: center;
  margin-left: 16px;
}
.tl-tools svg:nth-child(2) {
  margin-left: 17px;
}
.tl-tools svg:nth-child(3) {
  margin-left: 10px;
}
.tl-tools svg:nth-child(4) {
  margin-left: 12px;
}
.tl-tools svg:nth-child(5) {
  margin-left: 19px;
}
.tl-head {
  height: 17px;
  background: #2e2e2e;
  display: flex;
  align-items: center;
  border-bottom: 1px solid #0d0d0d;
  font-size: 9px;
  line-height: 11px;
  color: #8f8f8f;
}
.head-av {
  box-sizing: border-box;
  display: flex;
  align-items: center;
  gap: 5px;
  margin-left: 7px;
  width: 63px;
  height: 11px;
  border-right: 1px solid #5a5a5a;
  flex: none;
}
.solo-dot {
  width: 7px;
  height: 7px;
  border-radius: 50%;
  background: #c8c8c8;
}
.tl-tag {
  margin-left: 12px;
  flex: none;
}
.hash {
  box-sizing: border-box;
  margin-left: 8px;
  width: 31px;
  padding-left: 3px;
  border-left: 1px solid #5a5a5a;
  flex: none;
}
.src {
  box-sizing: border-box;
  width: 130px;
  padding-left: 5px;
  border-left: 1px solid #5a5a5a;
  border-right: 1px solid #5a5a5a;
  flex: none;
}
.head-sw {
  display: flex;
  align-items: center;
  gap: 4px;
  width: 133px;
  margin-left: 5px;
  flex: none;
}
.sw-film {
  margin-left: 3px;
}
.sw-blur {
  margin-left: 2px;
}
.sw-cube {
  margin-left: 1px;
}
.fx {
  color: #bdbdbd;
  font: italic 12px "Liberation Serif", serif;
}
.parent {
  box-sizing: border-box;
  width: 116px;
  padding-left: 5px;
  border-left: 1px solid #5a5a5a;
  border-right: 1px solid #5a5a5a;
  flex: none;
}
.layer-row {
  height: 17px;
  background: #414141;
  display: flex;
  align-items: center;
  color: #bdbdbd;
}
.eye {
  margin-left: 7px;
  flex: none;
}
.cell-dark {
  width: 13px;
  height: 13px;
  background: #383838;
  margin-left: 2px;
  flex: none;
}
.c1 {
  margin-left: 17px;
}
.lay-chev {
  margin-left: 12px;
  margin-bottom: 3px;
}
.lay-color {
  width: 11px;
  height: 12px;
  margin-left: 6px;
  background: #6a7fe0;
  flex: none;
}
.lay-num {
  margin-left: 11px;
  width: 8px;
  flex: none;
}
.lay-star {
  margin-left: 20px;
  flex: none;
}
.lay-name {
  box-sizing: border-box;
  width: 111px;
  height: 15px;
  margin-left: 4px;
  padding-left: 2px;
  font-size: 11px;
  line-height: 12px;
  border: 1.500px solid #aaa;
  background: #333;
  color: #b5b5b5;
  flex: none;
}
.sw1 {
  margin-left: 5px;
}
.sw2 {
  margin-left: 4px;
}
.sw3 {
  margin-left: 4px;
}
.c2 {
  margin-left: 34px;
}
.sw4 {
  margin-left: 3px;
}
.spiral {
  margin-left: 19px;
}
.parent-dd {
  box-sizing: border-box;
  width: 89px;
  height: 15px;
  margin-left: 7px;
  padding: 0 8px;
  background: #2a2a2a;
  display: flex;
  align-items: center;
  justify-content: space-between;
  color: #a8a8a8;
}
.parent-dd .chev {
  margin-top: -3px;
}
.prop-row {
  height: 17px;
  box-sizing: border-box;
  padding-top: 1px;
  border-bottom: 1px solid #2c2c2c;
  display: flex;
  align-items: center;
  color: #8f8f8f;
}
.prop-chev {
  margin-left: 93px;
  margin-bottom: 3px;
}
.prop-lbl {
  margin-left: 11px;
  width: 70px;
}
.add2 {
  margin-left: 179px;
  margin-right: 5px;
}
.rect-row {
  height: 17px;
  box-sizing: border-box;
  padding-bottom: 1px;
  display: flex;
  align-items: center;
}
.eye-cell {
  width: 14px;
  height: 15px;
  margin-left: 6px;
  background: #1d1d1d;
  display: flex;
  align-items: center;
  justify-content: center;
}
.rect-chev {
  margin-left: 90px;
}
.rect-name {
  box-sizing: border-box;
  width: 143px;
  height: 16px;
  margin-left: 8px;
  padding-left: 5px;
  line-height: 16px;
  background: #404040;
  color: #8f8f8f;
}
.blend-dd {
  box-sizing: border-box;
  width: 126px;
  height: 16px;
  margin-left: 5px;
  padding: 0 8px;
  background: #1d1d1d;
  display: flex;
  align-items: center;
  justify-content: space-between;
  color: #a0a0a0;
}
.blend-dd .chev {
  margin-top: -3px;
}
.trans-chev {
  margin-left: 93px;
  margin-right: 2px;
}
.reset {
  margin-left: 90px;
}

/* tracks */
.tl-right {
  position: relative;
  overflow: hidden;
  border-left: 1px solid #0d0d0d;
}
.nav-bar {
  height: 15px;
  display: flex;
  align-items: flex-start;
  padding-top: 5px;
  box-sizing: border-box;
  background: #232323;
}
.nav-range {
  width: 446px;
  height: 10px;
  background: #6e6e6e;
  border-left: 6px solid #2f8ee8;
  border-radius: 4px 0 0 4px;
  box-sizing: border-box;
  flex: none;
}
.nav-end {
  flex: 1;
  height: 10px;
  background: #3d3830;
  border-left: 5px solid #2f8ee8;
  margin-left: 1px;
}
.ruler {
  height: 20px;
  display: flex;
  color: #8f8f8f;
  border-bottom: 1px solid #0d0d0d;
  box-sizing: border-box;
  border-top: 1px solid #0d0d0d;
}
.tick {
  width: 66.400px;
  flex: none;
  text-align: center;
  line-height: 14px;
  background: linear-gradient(#999, #999) center bottom / 1px 4px no-repeat;
}
.tick:first-child {
  margin-left: -27.400px;
  padding-left: 6px;
  box-sizing: border-box;
  background: none;
}
.work-area {
  height: 15px;
  background: linear-gradient(90deg, #2f8ee8 5px, #666 5px);
  border-radius: 4px 0 0 4px;
}
.green-line {
  height: 5px;
  background: #25a83a;
  border-bottom: 1px solid #111;
  box-sizing: border-box;
}
.layer-bar {
  height: 16px;
  background: linear-gradient(90deg, #555 6px, transparent 6px), linear-gradient(#5f74d2, #4658b8);
  border-bottom: 1px solid #111;
  box-sizing: border-box;
}
.track {
  height: 17px;
  background: #333;
  border-bottom: 1px solid #222;
  box-sizing: border-box;
  padding: 2px 0 0 3px;
  display: flex;
}
.cti {
  position: absolute;
  left: -1px;
  top: 16px;
}
.callout {
  position: absolute;
  left: 875px;
  top: 625px;
  width: 92px;
  height: 38px;
  box-sizing: border-box;
  border: 4px solid #e0202c;
}
</style>
